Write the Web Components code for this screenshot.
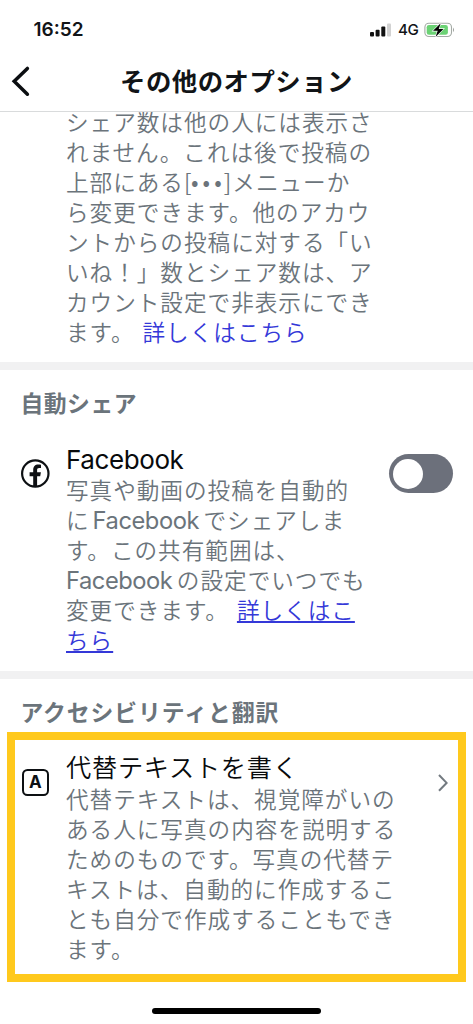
<!DOCTYPE html>
<html lang="ja">
<head>
<meta charset="utf-8">
<title>その他のオプション</title>
<style>
html,body{margin:0;background:#fff}
body{width:473px;height:1024px;overflow:hidden;font-family:Inter,"Noto Sans CJK JP",sans-serif;color:#111417}
</style>
</head>
<body>
<options-screen></options-screen>
<script>
const define=(name,html)=>{
  const t=document.createElement('template');
  t.innerHTML=html;
  customElements.define(name,class extends HTMLElement{
    constructor(){super();this.attachShadow({mode:'open'}).append(t.content.cloneNode(true));}
  });
};

define('status-bar',`<style>
:host{display:flex;box-sizing:border-box;height:52px;padding:7px 18px 0 33.5px;align-items:center}
.time{font:600 19px/1 Inter,sans-serif;letter-spacing:0;flex:1}
.net{font:500 15.2px/1 Inter,sans-serif;margin:0 5px 0 7px;width:21px;letter-spacing:-.4px}
svg{display:block}
</style>
<span class="time">16:52</span>
<svg width="21" height="14" viewBox="0 0 21 14"><g fill="#111"><rect y="9" width="4" height="4.5" rx="1"/><rect x="5.6" y="6.8" width="4" height="6.7" rx="1"/><rect x="11.3" y="3.6" width="4" height="9.9" rx="1"/></g><rect x="17" y=".6" width="4" height="12.9" rx="1" fill="#d2d2d2"/></svg>
<span class="net">4G</span>
<svg width="31" height="16" viewBox="0 0 31 16"><rect x=".9" y="1.3" width="26.6" height="13.2" rx="4" fill="#fff" stroke="#a3aaa4" stroke-width="1.1"/><rect x="2.7" y="3" width="21.2" height="9.8" rx="2.3" fill="#6bd274"/><path d="M29 5.4q2 2.4 0 4.8z" fill="#9b9f9b"/><path d="M16.7 1.2 9 8.8h4.7L11.5 15l8-8.1h-4.8z" fill="#000" stroke="#fff" stroke-width="1.2" paint-order="stroke"/></svg>`);

define('nav-header',`<style>
:host{display:grid;grid-template-columns:60px 1fr 60px;box-sizing:border-box;height:60px;padding-bottom:1px;align-items:center;border-bottom:1px solid #d9dbdc}
svg{display:block;margin-left:10px}
h1{margin:-2px 0 0;text-align:center;font:700 25.4px/34px "Noto Sans CJK JP",sans-serif;white-space:nowrap;letter-spacing:.5px}
</style>
<svg width="22" height="34" viewBox="0 0 22 34"><path d="M17.4 4.4 4.2 17.3l13.2 12.9" fill="none" stroke="#0b0e11" stroke-width="3.5" stroke-linecap="round" stroke-linejoin="miter"/></svg>
<h1><slot></slot></h1>`);

define('text-line',`<style>
:host{display:block;height:30.05px;line-height:30.05px;white-space:nowrap}
</style><slot></slot>`);

define('latin-word',`<style>
:host{font:400 var(--latin-size,23.2px)/1 Inter,sans-serif;letter-spacing:var(--latin-track,-.45px);margin-right:4.5px}
:host([inset]){margin-left:3px}
</style><slot></slot>`);

define('body-copy',`<style>
:host{display:block;font:350 22.6px/30px "Noto Sans CJK JP",sans-serif;letter-spacing:1px;color:#6b747b}
</style><slot></slot>`);

define('more-link',`<style>
:host{color:#3438d8;margin-left:8px}
:host([underlined]){text-decoration:underline;text-decoration-thickness:1.5px;text-underline-offset:2px}
:host([start]){margin-left:0}
</style><slot></slot>`);

define('section-gap',`<style>:host{display:block;height:8px;background:#f1f1f2}</style>`);

define('section-title',`<style>
:host{display:block;font:700 22.8px/34px "Noto Sans CJK JP",sans-serif;letter-spacing:var(--title-track,.95px);color:#6b747b;padding-left:20.5px;white-space:nowrap}
</style><slot></slot>`);

define('option-row',`<style>
:host{display:grid;grid-template-columns:66px 1fr auto;align-items:start}
.label{font:350 25.2px/32px "Noto Sans CJK JP",sans-serif;letter-spacing:.75px;height:var(--label-height,33px);white-space:nowrap;color:#080a0c}
.icon{padding-left:20px;padding-top:16px}
.end{padding-top:12px}
</style>
<div class="icon"><slot name="icon"></slot></div>
<div><div class="label"><slot name="label"></slot></div><slot></slot></div>
<div class="end"><slot name="end"></slot></div>`);

define('facebook-icon',`<style>:host,svg{display:block}</style>
<svg width="31" height="31" viewBox="0 0 31 31"><circle cx="15.3" cy="15.5" r="13.2" fill="none" stroke="#0d1013" stroke-width="2.2"/><path d="M13.2 29V18.2H9.6v-3.9h3.6v-2.2c0-3.9 1.8-5.7 5.1-5.7 1 0 1.9.1 2.7.3v3.4h-1.8c-1.6 0-2.1.7-2.1 2.2v2h3.8l-.7 3.9h-3.1V29z" fill="#0d1013"/></svg>`);

define('alt-icon',`<style>
:host{display:grid;place-items:center;box-sizing:border-box;width:27.5px;height:27.5px;margin:.5px 0 0 1.5px;border:2.3px solid #0d1013;border-radius:5.5px;font:700 17px/1 Inter,sans-serif;color:#0d1013}
</style><span>A</span>`);

define('toggle-switch',`<style>
:host{display:block;box-sizing:border-box;width:64.5px;height:39px;border-radius:20px;background:#6c707b;padding:4.5px;margin-right:20px}
i{display:block;width:30px;height:30px;border-radius:50%;background:#fff}
</style><i></i>`);

define('chevron-right',`<style>:host{display:block;margin:9px 9.5px 0 0}svg{display:block}</style>
<svg width="12" height="20" viewBox="0 0 12 20"><path d="M2 2 9.6 9.9 2 17.8" fill="none" stroke="#737a80" stroke-width="2"/></svg>`);

define('highlight-frame',`<style>
:host{display:block;box-sizing:border-box;width:459px;height:250px;margin-left:7px;border:8px solid #ffc91d;padding-top:12px}
::slotted(option-row){margin-left:-15px}
</style><slot></slot>`);

define('home-indicator',`<style>:host{display:block;width:169px;height:6.5px;border-radius:4px;background:#000;margin:25.5px auto 0 152px}</style>`);

define('options-screen',`<style>
:host{display:block;width:473px;height:1024px;background:#fff}
.notice{height:250px;overflow:hidden}
.notice body-copy{display:block;margin:-5px 0 0 66px}
.share{height:301px;box-sizing:border-box;padding-top:15.5px;--title-track:.5px}
.share option-row{margin-top:22.5px;--latin-size:23.7px}
.dots{letter-spacing:4.1px;margin:0 -2px 0 -1.5px}
.access{height:53px;box-sizing:border-box;padding-top:16px}
.fb{--latin-size:26px;--latin-track:-.4px}
.alt{display:block;margin-top:-2px}
highlight-frame option-row{--label-height:34px}
</style>
<status-bar></status-bar>
<nav-header>その他のオプション</nav-header>
<div class="notice"><body-copy>
<text-line>シェア数は他の人には表示さ</text-line>
<text-line>れません。これは後で投稿の</text-line>
<text-line>上部にある[<span class="dots">•••</span>]メニューか</text-line>
<text-line>ら変更できます。他のアカウ</text-line>
<text-line>ントからの投稿に対する「い</text-line>
<text-line>いね！」数とシェア数は、ア</text-line>
<text-line>カウント設定で非表示にでき</text-line>
<text-line>ます。<more-link>詳しくはこちら</more-link></text-line>
</body-copy></div>
<section-gap></section-gap>
<div class="share">
<section-title>自動シェア</section-title>
<option-row>
<facebook-icon slot="icon"></facebook-icon>
<latin-word slot="label" class="fb">Facebook</latin-word>
<toggle-switch slot="end"></toggle-switch>
<body-copy>
<text-line>写真や動画の投稿を自動的</text-line>
<text-line>に<latin-word inset>Facebook</latin-word>でシェアしま</text-line>
<text-line>す。この共有範囲は、</text-line>
<text-line><latin-word>Facebook</latin-word>の設定でいつでも</text-line>
<text-line>変更できます。<more-link underlined>詳しくはこ</more-link></text-line>
<text-line><more-link underlined start>ちら</more-link></text-line>
</body-copy>
</option-row>
</div>
<section-gap></section-gap>
<div class="access"><section-title>アクセシビリティと翻訳</section-title></div>
<highlight-frame>
<option-row>
<alt-icon slot="icon"></alt-icon>
<span slot="label" class="alt">代替テキストを書く</span>
<chevron-right slot="end"></chevron-right>
<body-copy>
<text-line>代替テキストは、視覚障がいの</text-line>
<text-line>ある人に写真の内容を説明する</text-line>
<text-line>ためのものです。写真の代替テ</text-line>
<text-line>キストは、自動的に作成するこ</text-line>
<text-line>とも自分で作成することもでき</text-line>
<text-line>ます。</text-line>
</body-copy>
</option-row>
</highlight-frame>
<home-indicator></home-indicator>`);
</script>
</body>
</html>
